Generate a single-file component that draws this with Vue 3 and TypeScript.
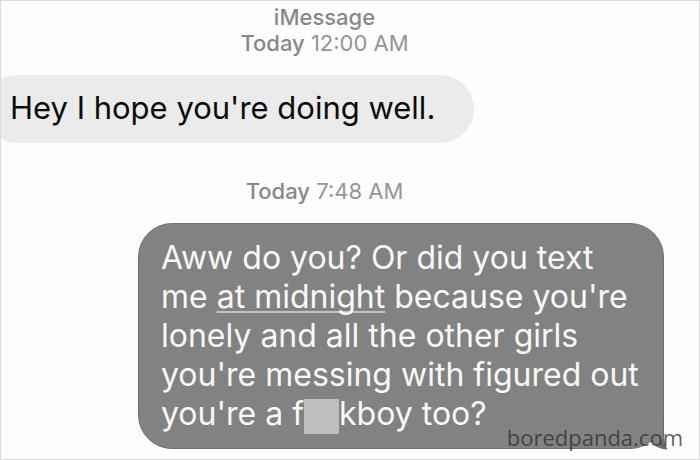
<script setup lang="ts">
interface Stamp {
  service?: string
  day: string
  time: string
}

const opening: Stamp = { service: 'iMessage', day: 'Today', time: '12:00 AM' }
const answer: Stamp = { day: 'Today', time: '7:48 AM' }
</script>

<template>
  <main class="thread">
    <header class="stamp">
      <div class="strong">{{ opening.service }}</div>
      <div><span class="strong">{{ opening.day }}</span> <time>{{ opening.time }}</time></div>
    </header>

    <p class="bubble incoming">Hey I hope you're doing well.</p>

    <div class="stamp second">
      <span class="strong">{{ answer.day }}</span> <time>{{ answer.time }}</time>
    </div>

    <div class="bubble outgoing">
      <p class="message">
        Aww do you? Or did you text<br />
        me <a class="date-link" href="#">at midnight</a> because you're<br />
        lonely and all the other girls<br />
        you're messing with figured out<br />
        you're a f<span class="censor"></span>kboy too?
      </p>
      <svg class="tail" viewBox="0 0 40 36" aria-hidden="true">
        <path d="M34 0 V20 C34 27 35 31 37 34 C32 34 27 32 23 28 L21 27 L16 18 L30 0Z" fill="#828282" />
        <path d="M33.5 0 V20 C33.5 27 35 31 37 34 C32 34 27 32 23 28.5" fill="none" stroke="#686868" stroke-width="1" />
        <path d="M33 24 C33.500 29 35 32 37 34 C33 33.500 30 32 28 30Z" fill="#686868" />
      </svg>
    </div>

    <footer class="watermark">boredpanda.com</footer>
  </main>
</template>

<style>
body {
  margin: 0;
  background: #fdfdfd;
}
</style>

<style scoped>
.thread {
  position: relative;
  box-sizing: border-box;
  min-height: 100vh;
  overflow: hidden;
  padding: 3px 35px 8px 0;
  border: 1px solid #dcdcdc;
  background: #fdfdfd;
  font-family: Inter, "Liberation Sans", sans-serif;
}

.stamp {
  padding-right: 16px;
  color: #959595;
  font-size: 22px;
  line-height: 26px;
  text-align: center;
}

.strong {
  font-weight: 500;
  color: #888888;
}

.bubble {
  box-sizing: border-box;
  width: fit-content;
  margin: 0;
}

.incoming {
  margin-top: 19px;
  margin-left: -18px;
  padding: 13px 39px 15px 27px;
  border-radius: 34px;
  background: #ebebeb;
  color: #0c0c0c;
  font-size: 31px;
  line-height: 40px;
}

.second {
  margin-top: 35px;
}

.outgoing {
  position: relative;
  width: 526px;
  max-width: 100%;
  margin-top: 19px;
  margin-left: auto;
  padding: 14px 22px 15px;
  border: 1px solid #707070;
  border-radius: 34px;
  background: #828282;
  color: #f8f8f8;
}

.message {
  margin: 0;
  font-size: 32px;
  line-height: 39px;
  white-space: nowrap;
}

.date-link {
  color: inherit;
  text-decoration: underline;
  text-decoration-color: #c2c2c2;
  text-decoration-thickness: 2px;
  text-decoration-skip-ink: none;
  text-underline-offset: 3px;
}

.censor {
  display: inline-block;
  width: 35px;
  height: 35px;
  margin: -4px 0;
  background: #bebebe;
  vertical-align: middle;
}

.tail {
  position: absolute;
  right: -7px;
  bottom: -3px;
  width: 40px;
  height: 36px;
}

.watermark {
  position: absolute;
  right: 16px;
  bottom: 8px;
  color: rgba(45, 45, 45, 0.75);
  font-family: "Open Sans", "Noto Sans", sans-serif;
  font-size: 22px;
  line-height: 28px;
}
</style>
